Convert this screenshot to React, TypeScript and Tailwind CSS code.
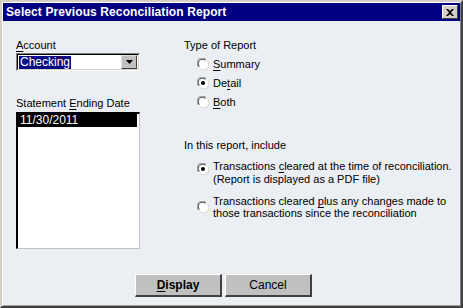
import React from 'react';

const font = { fontFamily: '"Liberation Sans", Arial, sans-serif' };

function Radio({ checked }: { checked?: boolean }) {
  return (
    <svg width="12" height="12" viewBox="0 0 12 12" className="shrink-0">
      <circle cx="6" cy="6" r="5.5" fill="#ffffff" />
      <path d="M1.5 9 A5 5 0 0 1 9 1.5" fill="none" stroke="#808080" strokeWidth="1" />
      <path d="M2.5 8.5 A4 4 0 0 1 8.5 2.5" fill="none" stroke="#404040" strokeWidth="1" />
      <path d="M10.5 3 A5 5 0 0 1 3 10.5" fill="none" stroke="#d4d0c8" strokeWidth="1" />
      {checked && <circle cx="6" cy="6" r="2" fill="#000000" />}
    </svg>
  );
}

function U({ children }: { children: React.ReactNode }) {
  return <span className="underline underline-offset-2">{children}</span>;
}

export default function App() {
  return (
    <div
      className="w-[463px] h-[308px] bg-[#ebeef2] border-t-2 border-l-2 border-r-2 border-b-2 border-t-[#d4d0c8] border-l-[#d4d0c8] border-r-[#404040] border-b-[#404040] text-[11px] text-black flex flex-col"
      style={font}
    >
      <div className="border-t border-l border-r border-b border-t-white border-l-white border-r-[#808080] border-b-[#a0a0a0] flex-1 flex flex-col">
        {/* title bar */}
        <div className="h-[18px] bg-[#000080] flex items-center justify-between pl-[3px] pr-[2px]">
          <span className="text-white font-bold text-[12px] leading-none tracking-[0.1px]">
            Select Previous Reconciliation Report
          </span>
          <div className="w-[16px] h-[14px] bg-[#d4d0c8] border-t border-l border-t-white border-l-white border-r border-b border-r-[#404040] border-b-[#404040] flex items-center justify-center">
            <svg width="8" height="7" viewBox="0 0 8 7">
              <path d="M0 0 L2 0 L4 2 L6 0 L8 0 L5 3.5 L8 7 L6 7 L4 5 L2 7 L0 7 L3 3.5 Z" fill="#000" />
            </svg>
          </div>
        </div>

        {/* body */}
        <div className="flex-1 flex flex-col">
          <div className="flex pl-[13px] pt-[17px]">
            {/* left column */}
            <div className="w-[124px] flex flex-col">
              <div className="leading-[14px]"><U>A</U>ccount</div>
              <div className="mt-[1px] h-[18px] w-[124px] bg-white border-t border-l border-t-[#808080] border-l-[#808080] border-b border-r border-b-white border-r-white">
                <div className="h-full border-t border-l border-t-black border-l-black border-b border-r border-b-[#d4d0c8] border-r-[#d4d0c8] flex items-center justify-between">
                  <span className="bg-[#0a0a80] text-white leading-[13px] text-[12px] px-[1px] ml-[1px]">Checking</span>
                  <div className="w-[16px] h-[14px] mr-[1px] bg-[#c0c0c0] border-t border-l border-t-[#e0e0e0] border-l-[#e0e0e0] border-b border-r border-b-[#404040] border-r-[#404040] flex items-center justify-center">
                    <svg width="7" height="4" viewBox="0 0 7 4">
                      <path d="M0 0 H7 L3.5 4 Z" fill="#000" />
                    </svg>
                  </div>
                </div>
              </div>
              <div className="mt-[25px] leading-[14px]">Statement <U>E</U>nding Date</div>
              <div className="mt-[2px] h-[137px] w-[124px] bg-white border-t-2 border-l-2 border-t-black border-l-black border-b border-r border-b-[#c0c0c0] border-r-[#c0c0c0]">
                <div className="bg-black text-white text-[12px] leading-[13px] pl-[2px] mr-[2px]">11/30/2011</div>
              </div>
            </div>

            {/* right column */}
            <div className="ml-[44px] flex flex-col">
              <div className="leading-[14px]">Type of Report</div>
              <div className="ml-[13px] mt-[5px] flex flex-col gap-[5px]">
                <div className="flex items-center gap-[4px] h-[14px]"><Radio /><span><U>S</U>ummary</span></div>
                <div className="flex items-center gap-[4px] h-[14px]"><Radio checked /><span>De<U>t</U>ail</span></div>
                <div className="flex items-center gap-[4px] h-[14px]"><Radio /><span><U>B</U>oth</span></div>
              </div>
              <div className="mt-[29px] leading-[14px]">In this report, include</div>
              <div className="ml-[13px] mt-[8px] flex items-start gap-[4px]">
                <div className="mt-[3px]"><Radio checked /></div>
                <span className="leading-[13px]">
                  Transactions <U>c</U>leared at the time of reconciliation.<br />
                  (Report is displayed as a PDF file)
                </span>
              </div>
              <div className="ml-[13px] mt-[9px] flex items-center gap-[4px]">
                <Radio />
                <span className="leading-[12px]">
                  Transactions cleared <U>p</U>lus any changes made to<br />
                  those transactions since the reconciliation
                </span>
              </div>
            </div>
          </div>

          {/* buttons */}
          <div className="mt-auto mb-[8px] flex gap-[3px] pl-[132px]">
            <button className="w-[87px] h-[23px] bg-[#c0c0c0] border-t border-l border-t-white border-l-white border-b-2 border-r-2 border-b-[#404040] border-r-[#404040] font-bold text-[12px]">
              <U>D</U>isplay
            </button>
            <button className="w-[87px] h-[23px] bg-[#c0c0c0] border-t border-l border-t-white border-l-white border-b-2 border-r-2 border-b-[#404040] border-r-[#404040] text-[12px]">
              Cancel
            </button>
          </div>
        </div>
      </div>
    </div>
  );
}
